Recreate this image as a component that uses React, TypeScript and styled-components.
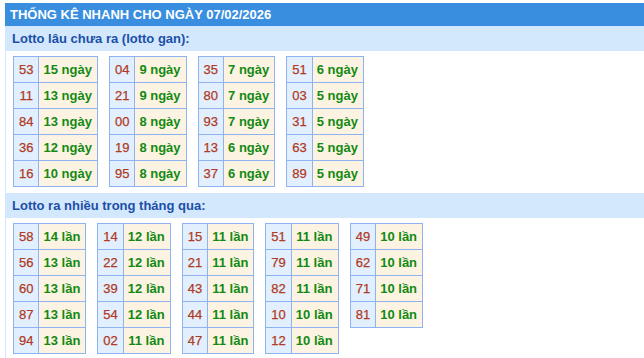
import styled, { createGlobalStyle } from 'styled-components';

const GlobalStyle = createGlobalStyle`
  body {
    margin: 0;
    background: #fff;
    font-family: 'Liberation Sans', Arial, sans-serif;
    overflow: hidden;
  }
`;

type Entry = [string, string];

const ganGroups: Entry[][] = [
  [['53', '15'], ['11', '13'], ['84', '13'], ['36', '12'], ['16', '10']],
  [['04', '9'], ['21', '9'], ['00', '8'], ['19', '8'], ['95', '8']],
  [['35', '7'], ['80', '7'], ['93', '7'], ['13', '6'], ['37', '6']],
  [['51', '6'], ['03', '5'], ['31', '5'], ['63', '5'], ['89', '5']],
];

const hotGroups: Entry[][] = [
  [['58', '14'], ['56', '13'], ['60', '13'], ['87', '13'], ['94', '13']],
  [['14', '12'], ['22', '12'], ['39', '12'], ['54', '12'], ['02', '11']],
  [['15', '11'], ['21', '11'], ['43', '11'], ['44', '11'], ['47', '11']],
  [['51', '11'], ['79', '11'], ['82', '11'], ['10', '10'], ['12', '10']],
  [['49', '10'], ['62', '10'], ['71', '10'], ['81', '10']],
];

function StatTable({ rows, unit }: { rows: Entry[]; unit: string }) {
  return (
    <Table>
      <tbody>
        {rows.map(([num, count]) => (
          <tr key={num}>
            <NumCell>{num}</NumCell>
            <CountCell>
              {count} {unit}
            </CountCell>
          </tr>
        ))}
      </tbody>
    </Table>
  );
}

export default function App() {
  return (
    <>
      <GlobalStyle />
      <Page>
        <Title>THỐNG KÊ NHANH CHO NGÀY 07/02/2026</Title>
        <Body>
          <Label>Lotto lâu chưa ra (lotto gan):</Label>
          <Tables>
            {ganGroups.map((g, i) => (
              <StatTable key={i} rows={g} unit='ngày' />
            ))}
          </Tables>
          <Label>Lotto ra nhiều trong tháng qua:</Label>
          <Tables>
            {hotGroups.map((g, i) => (
              <StatTable key={i} rows={g} unit='lần' />
            ))}
          </Tables>
        </Body>
      </Page>
    </>
  );
}

const Page = styled.div`
  padding: 3px 0 0 5px;
`;

const Title = styled.div`
  height: 23px;
  line-height: 23px;
  padding-left: 5px;
  background: #3a8ee0;
  color: #fff;
  font-size: 13px;
  font-weight: 700;
`;

const Body = styled.div`
  border-left: 1px solid #d4e6fb;
`;

const Label = styled.div`
  height: 25px;
  line-height: 25px;
  margin-left: -1px;
  padding-left: 7px;
  background: #d4e8fd;
  color: #1b4fa8;
  font-size: 13px;
  font-weight: 700;
`;

const Tables = styled.div`
  display: flex;
  flex-wrap: wrap;
  align-items: flex-start;
  gap: 11px;
  padding: 5px 0 6px 7px;
`;

const Table = styled.table`
  border-collapse: collapse;
  font-size: 13px;
`;

const Cell = styled.td`
  height: 25px;
  padding: 0 5px;
  border: 1px solid #8fb2f0;
  text-align: center;
  white-space: nowrap;
`;

const NumCell = styled(Cell)`
  background: #e2effe;
  color: #b03a22;
  -webkit-text-stroke: 0.25px #b03a22;
`;

const CountCell = styled(Cell)`
  padding-left: 4px;
  background: #fdf3e3;
  color: #128a12;
  font-weight: 700;
`;
